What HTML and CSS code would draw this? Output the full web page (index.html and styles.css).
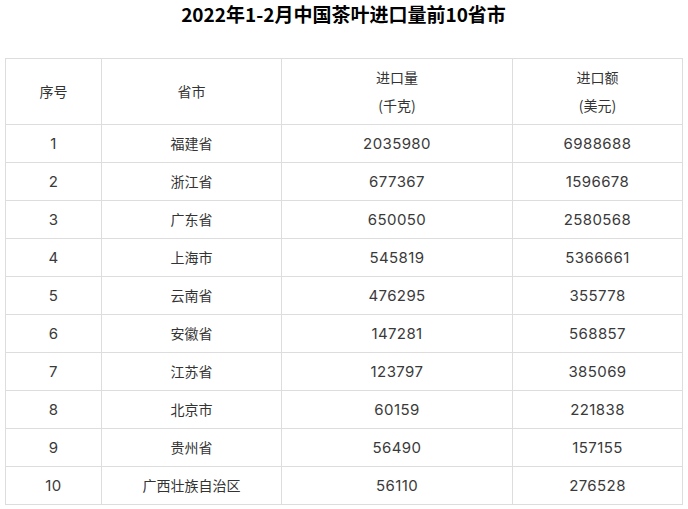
FILE: index.html
```html
<!DOCTYPE html>
<html lang="zh">
<head>
<meta charset="utf-8">
<link rel="stylesheet" href="styles.css">
</head>
<body>
<div class="page">
  <h1 class="title">2022年1-2月中国茶叶进口量前10省市</h1>
  <table class="data">
    <colgroup>
      <col class="c1"><col class="c2"><col class="c3"><col class="c4">
    </colgroup>
    <thead>
      <tr>
        <th>序号</th>
        <th>省市</th>
        <th><span class="line">进口量</span><span class="line">(千克)</span></th>
        <th><span class="line">进口额</span><span class="line">(美元)</span></th>
      </tr>
    </thead>
    <tbody>
      <tr><td class="num">1</td><td>福建省</td><td class="num">2035980</td><td class="num">6988688</td></tr>
      <tr><td class="num">2</td><td>浙江省</td><td class="num">677367</td><td class="num">1596678</td></tr>
      <tr><td class="num">3</td><td>广东省</td><td class="num">650050</td><td class="num">2580568</td></tr>
      <tr><td class="num">4</td><td>上海市</td><td class="num">545819</td><td class="num">5366661</td></tr>
      <tr><td class="num">5</td><td>云南省</td><td class="num">476295</td><td class="num">355778</td></tr>
      <tr><td class="num">6</td><td>安徽省</td><td class="num">147281</td><td class="num">568857</td></tr>
      <tr><td class="num">7</td><td>江苏省</td><td class="num">123797</td><td class="num">385069</td></tr>
      <tr><td class="num">8</td><td>北京市</td><td class="num">60159</td><td class="num">221838</td></tr>
      <tr><td class="num">9</td><td>贵州省</td><td class="num">56490</td><td class="num">157155</td></tr>
      <tr><td class="num">10</td><td>广西壮族自治区</td><td class="num">56110</td><td class="num">276528</td></tr>
    </tbody>
  </table>
</div>
</body>
</html>
```

FILE: styles.css
```css
html, body {
  margin: 0;
  padding: 0;
  background: #fff;
}
.page {
  padding: 0 6px 0 5px;
  font-family: "Noto Sans CJK SC", sans-serif;
  color: #333;
}
.title {
  margin: 0;
  height: 28px;
  line-height: 27px;
  font-size: 19px;
  font-weight: bold;
  color: #000;
  text-align: center;
}
.data {
  margin-top: 30px;
  width: 677px;
  border-collapse: collapse;
  table-layout: fixed;
  font-size: 14px;
}
.c1 { width: 96px; }
.c2 { width: 180px; }
.c3 { width: 231px; }
.c4 { width: 170px; }
.data th, .data td {
  border: 1px solid #dddddd;
  text-align: center;
  padding: 0 0 1px 0;
  font-weight: normal;
}
.data th {
  height: 64px;
}
.data td {
  height: 36px;
}
.line {
  display: block;
  line-height: 28px;
}
.num {
  font-family: "Inter", "Noto Sans CJK SC", sans-serif;
  font-size: 15px;
  font-weight: 300;
  letter-spacing: 0.4px;
  color: #3a3a3a;
}
```
